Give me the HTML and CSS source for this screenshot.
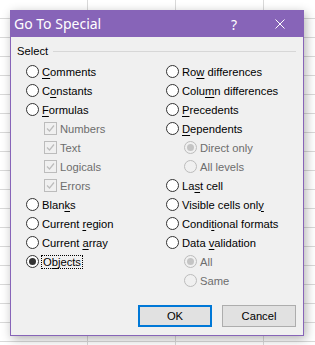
FILE: index.html
```html
<!DOCTYPE html>
<html lang="en">
<head>
    <meta charset="UTF-8">
    <title>Go To Special</title>
    <link rel="stylesheet" href="styles.css">
</head>
<body>
    <div class="dialog">
        <div class="titlebar">
            <span class="title">Go To Special</span>
            <span class="caption-btn help">?</span>
            <span class="caption-btn close">
                <svg width="10" height="10" viewBox="0 0 10 10">
                    <path d="M0.5 0.5 L9.5 9.5 M9.5 0.5 L0.5 9.5" stroke="#fff" stroke-width="1" fill="none"/>
                </svg>
            </span>
        </div>

        <div class="content">
            <div class="group-label"><span>Select</span></div>

            <div class="options">
                <div class="col">
                    <div class="opt"><span class="radio"></span><span><u>C</u>omments</span></div>
                    <div class="opt"><span class="radio"></span><span>C<u>o</u>nstants</span></div>
                    <div class="opt"><span class="radio"></span><span><u>F</u>ormulas</span></div>
                    <div class="opt sub disabled"><span class="check"><svg width="11" height="11" viewBox="0 0 11 11"><path d="M2 5.5 L4.5 8 L9 2.5" stroke="#bcbcbc" stroke-width="1.2" fill="none"/></svg></span><span>Numbers</span></div>
                    <div class="opt sub disabled"><span class="check"><svg width="11" height="11" viewBox="0 0 11 11"><path d="M2 5.5 L4.5 8 L9 2.5" stroke="#bcbcbc" stroke-width="1.2" fill="none"/></svg></span><span>Text</span></div>
                    <div class="opt sub disabled"><span class="check"><svg width="11" height="11" viewBox="0 0 11 11"><path d="M2 5.5 L4.5 8 L9 2.5" stroke="#bcbcbc" stroke-width="1.2" fill="none"/></svg></span><span>Logicals</span></div>
                    <div class="opt sub disabled"><span class="check"><svg width="11" height="11" viewBox="0 0 11 11"><path d="M2 5.5 L4.5 8 L9 2.5" stroke="#bcbcbc" stroke-width="1.2" fill="none"/></svg></span><span>Errors</span></div>
                    <div class="opt"><span class="radio"></span><span>Blan<u>k</u>s</span></div>
                    <div class="opt"><span class="radio"></span><span>Current <u>r</u>egion</span></div>
                    <div class="opt"><span class="radio"></span><span>Current <u>a</u>rray</span></div>
                    <div class="opt"><span class="radio checked"></span><span class="focus">O<u>b</u>jects</span></div>
                </div>
                <div class="col">
                    <div class="opt"><span class="radio"></span><span>Ro<u>w</u> differences</span></div>
                    <div class="opt"><span class="radio"></span><span>Colu<u>m</u>n differences</span></div>
                    <div class="opt"><span class="radio"></span><span><u>P</u>recedents</span></div>
                    <div class="opt"><span class="radio"></span><span><u>D</u>ependents</span></div>
                    <div class="opt sub disabled"><span class="radio checked"></span><span>Direct only</span></div>
                    <div class="opt sub disabled"><span class="radio"></span><span>All levels</span></div>
                    <div class="opt"><span class="radio"></span><span>La<u>s</u>t cell</span></div>
                    <div class="opt"><span class="radio"></span><span>Visible cells onl<u>y</u></span></div>
                    <div class="opt"><span class="radio"></span><span>Condi<u>t</u>ional formats</span></div>
                    <div class="opt"><span class="radio"></span><span>Data <u>v</u>alidation</span></div>
                    <div class="opt sub disabled"><span class="radio checked"></span><span>All</span></div>
                    <div class="opt sub disabled"><span class="radio"></span><span>Same</span></div>
                </div>
            </div>

            <div class="buttons">
                <button class="btn default">OK</button>
                <button class="btn">Cancel</button>
            </div>
        </div>
    </div>
</body>
</html>
```

FILE: styles.css
```css
/* Sheet behind the dialog */
* {
    box-sizing: border-box;
    margin: 0;
    padding: 0;
}

body {
    width: 315px;
    height: 345px;
    overflow: hidden;
    padding: 10px 0 0 10px;
    background-color: #fff;
    background-image:
        repeating-linear-gradient(to bottom, transparent 0, transparent 18px, #d9d9d9 18px, #d9d9d9 19px),
        repeating-linear-gradient(to right, transparent 0, transparent 87px, #d9d9d9 87px, #d9d9d9 88px);
    font-family: "Liberation Sans", Arial, sans-serif;
    font-size: 11.2px;
    color: #000;
}

/* Dialog window */
.dialog {
    width: 294px;
    height: 326px;
    border: 1px solid #8764b8;
    background: #f0f0f0;
    box-shadow: 2px 3px 10px rgba(0, 0, 0, 0.3);
    display: flex;
    flex-direction: column;
}

.titlebar {
    height: 26px;
    background: #8764b8;
    color: #fff;
    display: flex;
    align-items: center;
    padding-left: 3px;
}

.title {
    flex: 1;
    font-family: "Noto Sans", sans-serif;
    font-size: 14px;
    margin-top: -1px;
}

.caption-btn {
    width: 46px;
    height: 26px;
    display: flex;
    align-items: center;
    justify-content: center;
    font-family: "Noto Sans", sans-serif;
    font-size: 14px;
}

.content {
    flex: 1;
    padding: 7px 7px 8px 6px;
    display: flex;
    flex-direction: column;
}

/* "Select" label with rule */
.group-label {
    display: flex;
    align-items: center;
    height: 14px;
    line-height: 14px;
}

.group-label::after {
    content: "";
    flex: 1;
    height: 1px;
    background: #d7d7d7;
    margin-left: 5px;
}

.options {
    display: grid;
    grid-template-columns: 140px 1fr;
    margin-top: 4px;
    padding-left: 9px;
}

.opt {
    height: 19px;
    display: flex;
    align-items: center;
    gap: 3px;
    white-space: nowrap;
}

.opt u {
    text-underline-offset: 2px;
}

.opt.sub {
    padding-left: 18px;
}

.opt.disabled {
    color: #6d6d6d;
}

/* Radio buttons */
.radio {
    width: 13px;
    height: 13px;
    border: 1px solid #333;
    border-radius: 50%;
    background: #fff;
    display: flex;
    align-items: center;
    justify-content: center;
    flex-shrink: 0;
}

.radio.checked::after {
    content: "";
    width: 7px;
    height: 7px;
    border-radius: 50%;
    background: #333;
}

.disabled .radio {
    border-color: #bcbcbc;
    background: #f0f0f0;
}

.disabled .radio.checked::after {
    background: #c4c4c4;
}

/* Checkboxes */
.check {
    width: 13px;
    height: 13px;
    border: 1px solid #bcbcbc;
    background: #f0f0f0;
    display: flex;
    flex-shrink: 0;
}

.focus {
    outline: 1px dotted #000;
    outline-offset: 0;
    padding: 0 1px;
}

/* Buttons */
.buttons {
    margin-top: auto;
    display: flex;
    justify-content: flex-end;
    gap: 10px;
}

.btn {
    width: 74px;
    height: 22px;
    background: #e1e1e1;
    border: 1px solid #adadad;
    font-family: "Liberation Sans", Arial, sans-serif;
    font-size: 11.2px;
    color: #000;
}

.btn.default {
    border: 2px solid #0078d7;
}
```
